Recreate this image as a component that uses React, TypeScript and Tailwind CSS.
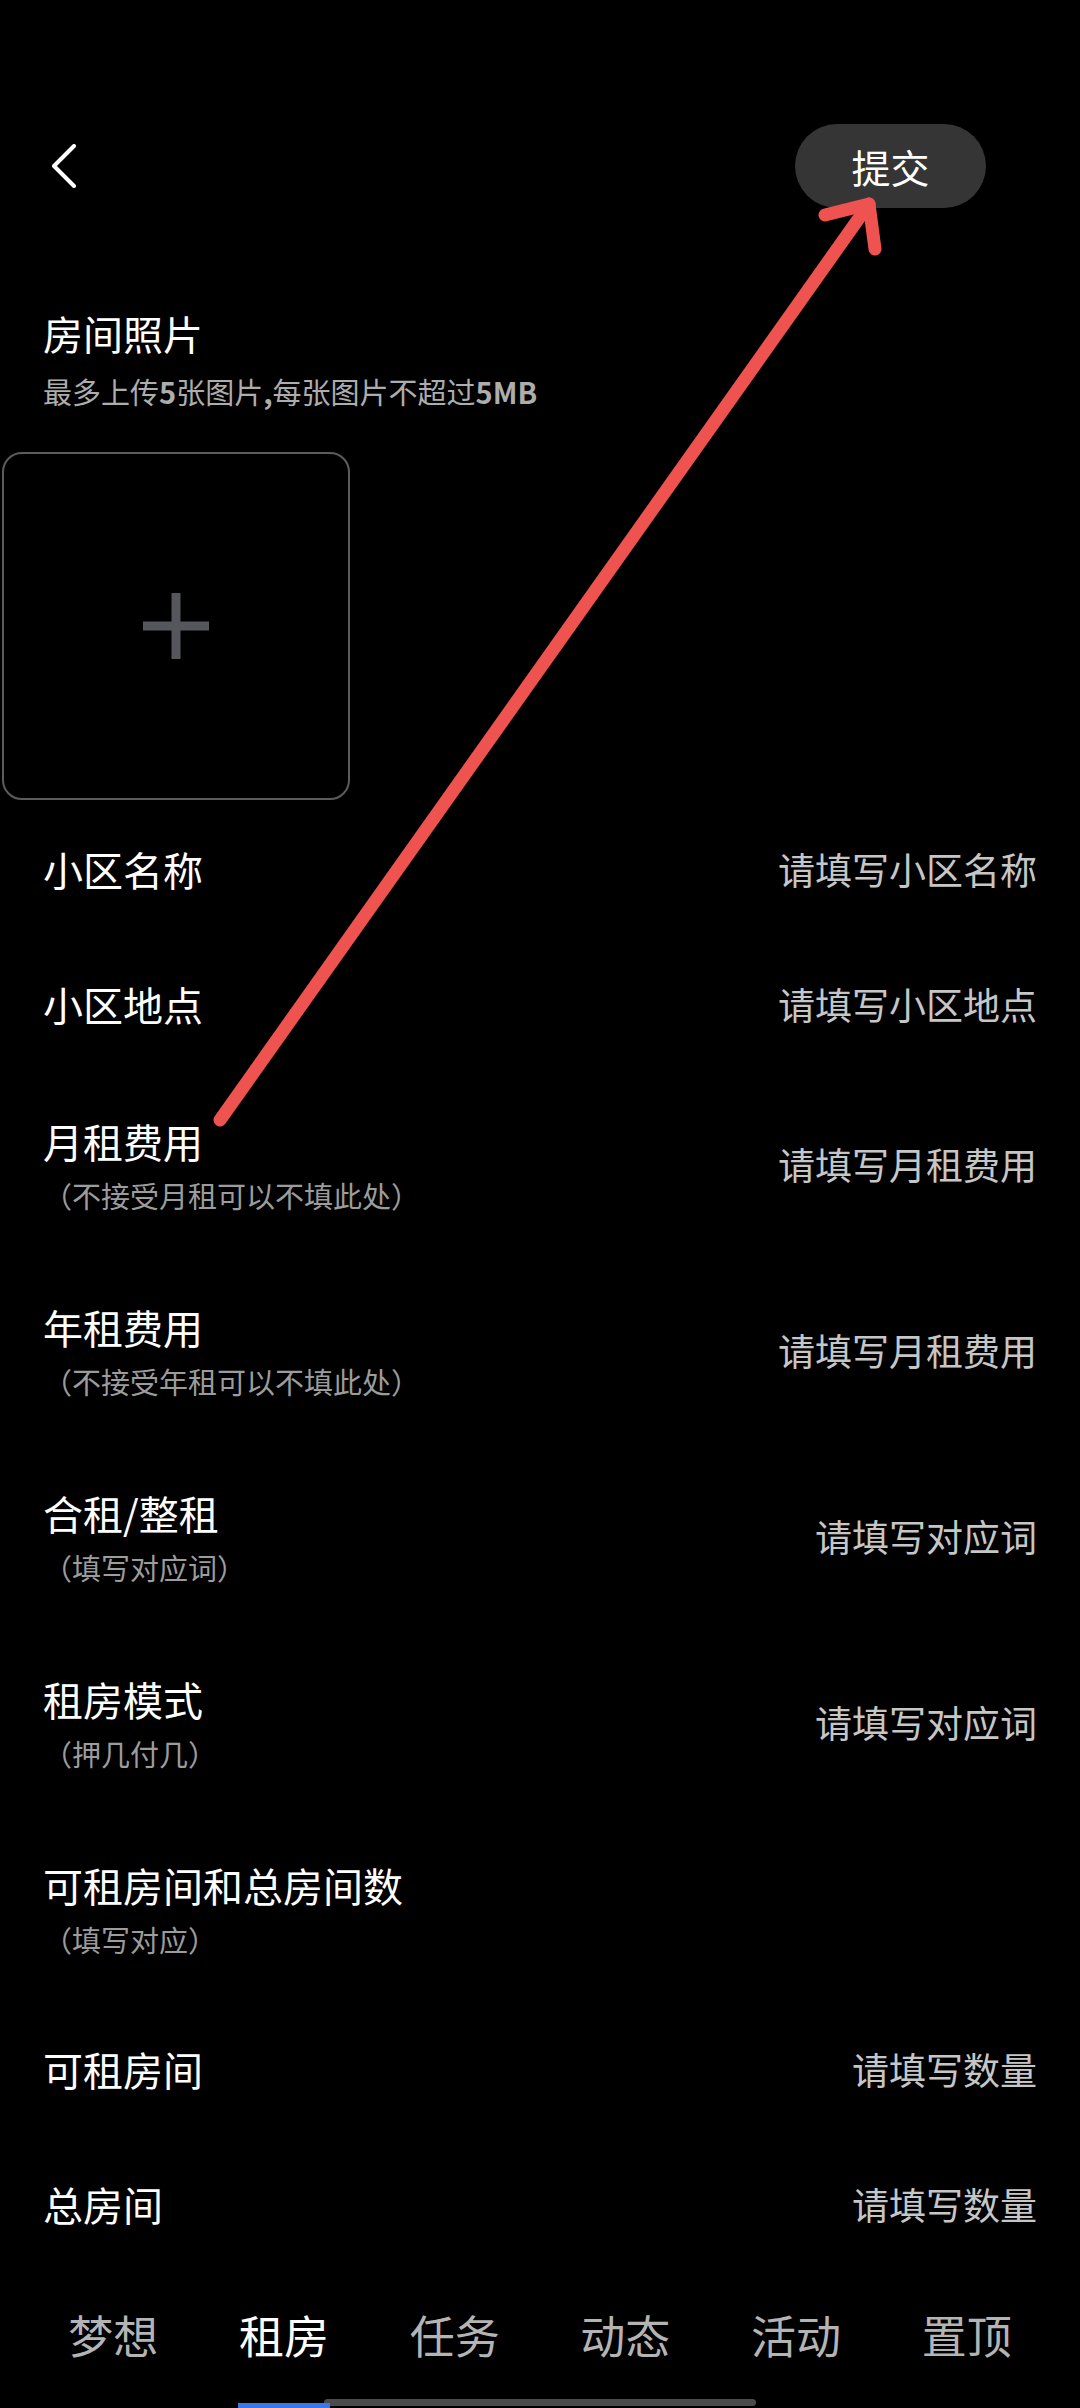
import React from 'react';

type Row = { label: string; note?: string; placeholder?: string };

const rows: Row[] = [
  { label: '小区名称', placeholder: '请填写小区名称' },
  { label: '小区地点', placeholder: '请填写小区地点' },
  { label: '月租费用', note: '（不接受月租可以不填此处）', placeholder: '请填写月租费用' },
  { label: '年租费用', note: '（不接受年租可以不填此处）', placeholder: '请填写月租费用' },
  { label: '合租/整租', note: '（填写对应词）', placeholder: '请填写对应词' },
  { label: '租房模式', note: '（押几付几）', placeholder: '请填写对应词' },
  { label: '可租房间和总房间数', note: '（填写对应）' },
  { label: '可租房间', placeholder: '请填写数量' },
  { label: '总房间', placeholder: '请填写数量' },
];

const tabs = ['梦想', '租房', '任务', '动态', '活动', '置顶'];

const FormRow: React.FC<Row> = ({ label, note, placeholder }) => (
  <div className={`flex items-center justify-between px-[43px] ${note ? 'h-[186px]' : 'h-[135px]'}`}>
    <div className="flex flex-col">
      <span className="text-[40px] leading-[56px] text-white">{label}</span>
      {note && <span className="mt-[6px] text-[29px] leading-[40px] text-[#9c9c9c]">{note}</span>}
    </div>
    {placeholder && <span className="text-[37px] leading-[52px] text-[#c6c6c6]">{placeholder}</span>}
  </div>
);

const App: React.FC = () => {
  return (
    <div className="relative h-[2408px] w-full overflow-hidden bg-black font-['Noto_Sans_CJK_SC',sans-serif]">
      {/* header */}
      <div className="mt-[124px] flex h-[84px] items-center justify-between pl-[50px] pr-[94px]">
        <svg width="28" height="44" viewBox="0 0 28 44" fill="none">
          <path d="M24 2 L4 22 L24 42" stroke="white" strokeWidth="4" strokeLinecap="round" strokeLinejoin="round" />
        </svg>
        <button className="flex h-[84px] w-[191px] items-center justify-center rounded-full bg-[#353535] text-[39px] text-white">
          提交
        </button>
      </div>

      {/* photos */}
      <div className="mt-[97px] px-[43px]">
        <div className="text-[40px] leading-[56px] text-white">房间照片</div>
        <div className="mt-[10px] text-[29px] leading-[40px] text-[#adadad]">
          最多上传<b className="font-bold">5</b>张图片<b className="font-bold">,</b>每张图片不超过<b className="font-bold">5MB</b>
        </div>
      </div>
      <div className="ml-[2px] mt-[41px] flex h-[348px] w-[348px] items-center justify-center rounded-[20px] border-2 border-[#5c5c5c]">
        <svg width="66" height="66" viewBox="0 0 66 66">
          <rect x="0" y="28.5" width="66" height="9" fill="#55575c" />
          <rect x="28.5" y="0" width="9" height="66" fill="#55575c" />
        </svg>
      </div>

      {/* form */}
      <div className="mt-[1px]">
        {rows.map((r) => (
          <FormRow key={r.label} {...r} />
        ))}
      </div>

      {/* tabs */}
      <div className="grid h-[128px] grid-cols-6 items-center px-[28px]">
        {tabs.map((t) => (
          <div key={t} className={`text-center text-[45px] leading-[60px] ${t === '租房' ? 'text-white' : 'text-[#b4b4b4]'}`}>
            {t}
          </div>
        ))}
      </div>
      <div className="flex h-[10px]">
        <div className="relative z-10 ml-[238px] h-[6px] w-[92px] self-end bg-[#3a78ee]" />
        <div className="-ml-[6px] h-[7px] w-[432px] self-start rounded-full bg-[#4b4b4b]" />
      </div>

      {/* annotation arrow */}
      <svg className="pointer-events-none absolute left-0 top-0" width="1080" height="2408" viewBox="0 0 1080 2408" fill="none">
        <g stroke="#ef5350" strokeWidth="13" strokeLinecap="round" strokeLinejoin="round">
          <path d="M220 1120 L869 204" />
          <path d="M825 215 L869 204 L875 249" />
        </g>
      </svg>
    </div>
  );
};

export default App;
